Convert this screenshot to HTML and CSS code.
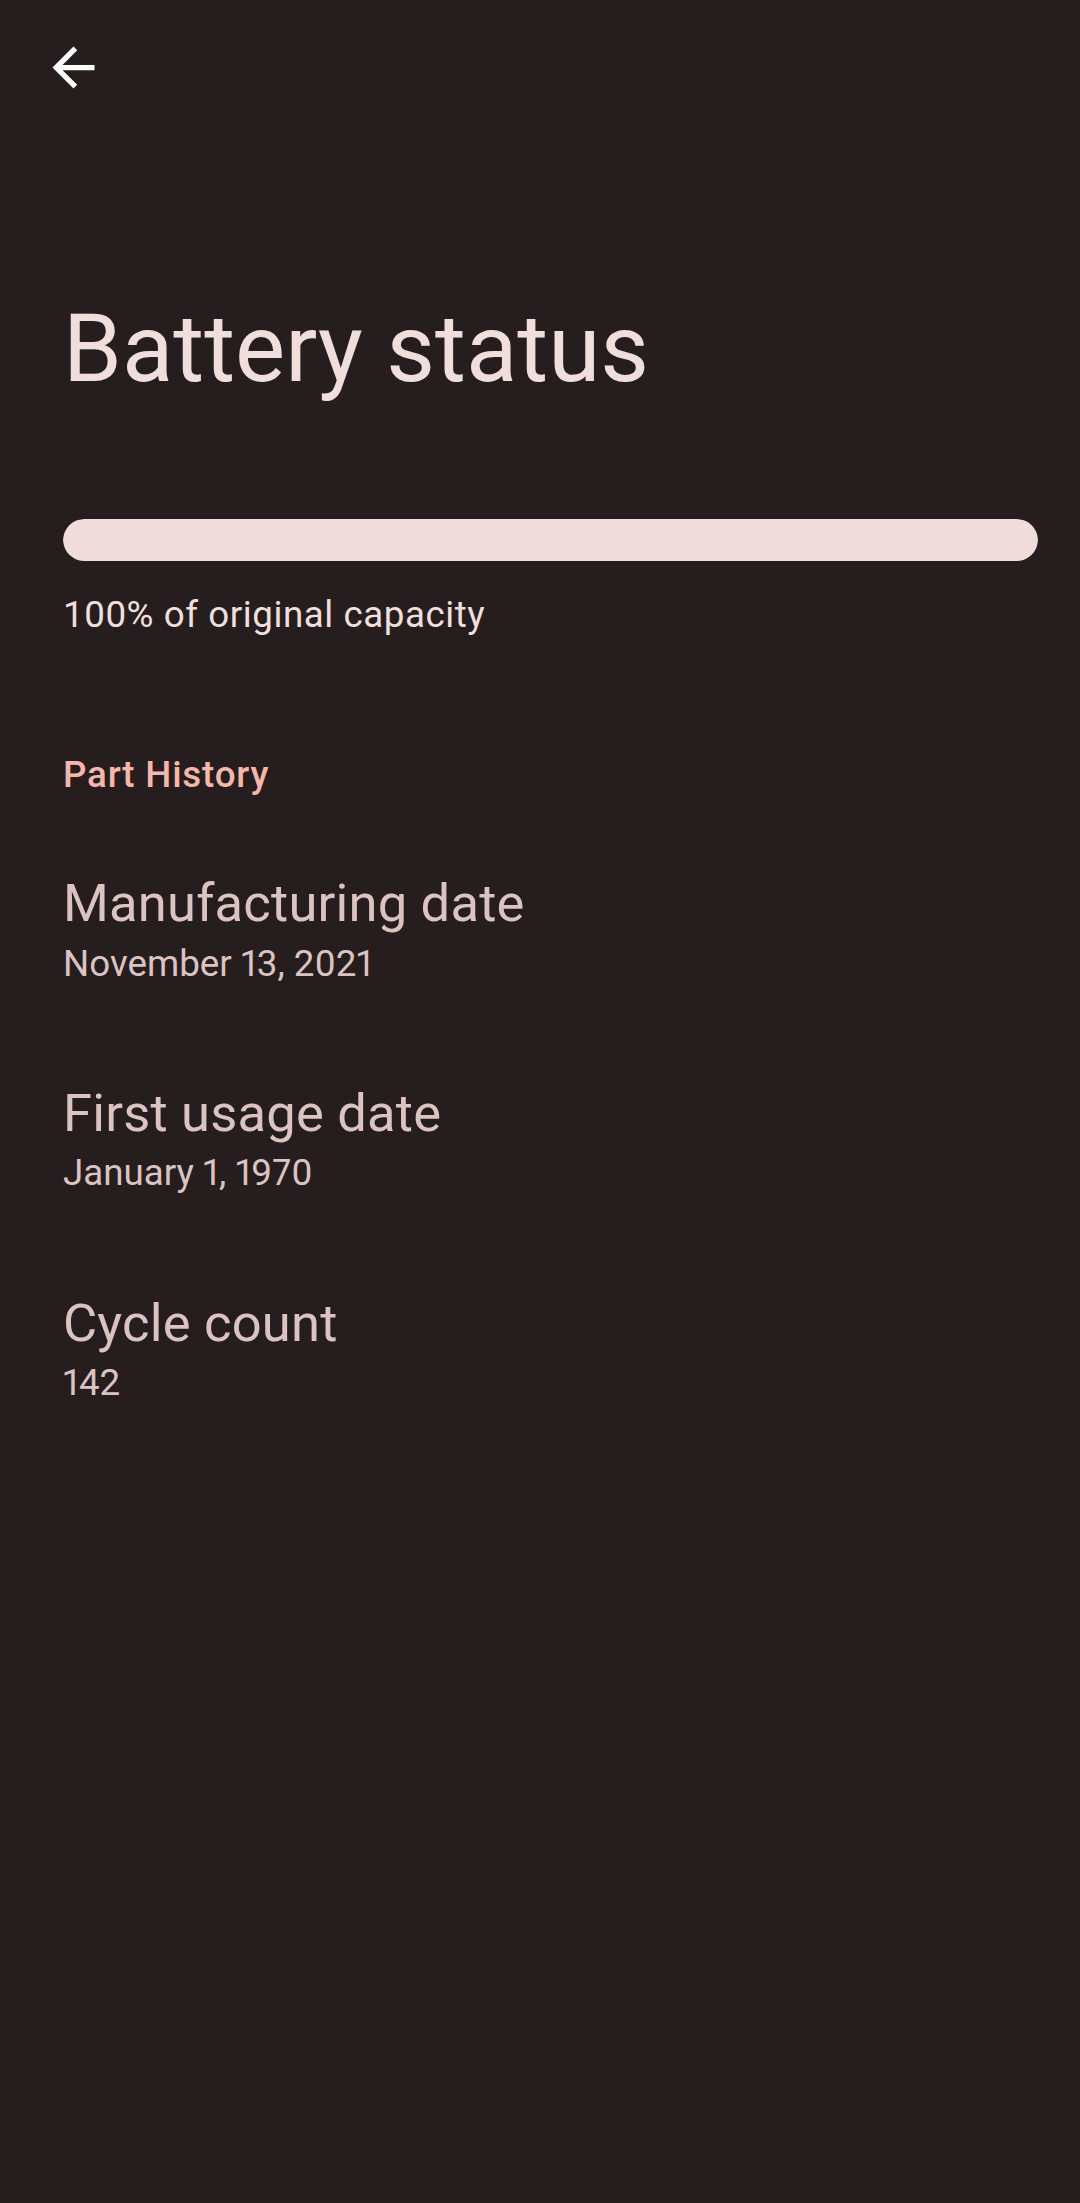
FILE: index.html
```html
<!DOCTYPE html>
<html lang="en">
<head>
    <meta charset="UTF-8">
    <meta name="viewport" content="width=device-width, initial-scale=1.0">
    <title>Battery status</title>
    <link rel="stylesheet" href="styles.css">
</head>
<body>
    <div class="toolbar">
        <button class="back-button" aria-label="Navigate up">
            <svg viewBox="0 0 24 24" width="63" height="63">
                <path d="M20 11H7.83l5.59-5.59L12 4l-8 8 8 8 1.41-1.41L7.83 13H20v-2z" fill="#ffffff"/>
            </svg>
        </button>
    </div>

    <h1 class="page-title">Battery status</h1>

    <div class="capacity">
        <div class="capacity-bar">
            <div class="capacity-fill" style="width: 100%"></div>
        </div>
        <p class="capacity-label">100% of original capacity</p>
    </div>

    <h2 class="category-title">Part History</h2>

    <div class="pref-list">
        <div class="pref-item">
            <div class="pref-title">Manufacturing date</div>
            <div class="pref-summary">November 13, 2021</div>
        </div>
        <div class="pref-item">
            <div class="pref-title">First usage date</div>
            <div class="pref-summary">January 1, 1970</div>
        </div>
        <div class="pref-item">
            <div class="pref-title">Cycle count</div>
            <div class="pref-summary">142</div>
        </div>
    </div>
</body>
</html>
```

FILE: styles.css
```css
* {
    box-sizing: border-box;
    margin: 0;
    padding: 0;
}

body {
    font-family: Roboto, "Noto Sans", Arial, sans-serif;
    background-color: #261e1e;
    min-height: 2203px;
}

.toolbar {
    padding: 36px 0 0 42px;
    height: 99px;
}

.back-button {
    display: block;
    width: 63px;
    height: 63px;
    background: none;
    border: none;
    cursor: pointer;
}

.back-button svg {
    display: block;
}

.page-title {
    margin: 193px 0 0 63px;
    font-size: 94.5px;
    font-weight: 400;
    line-height: 1.2;
    color: #f0dedd;
}

.capacity {
    margin: 114px 42px 0 63px;
}

.capacity-bar {
    height: 42px;
    border-radius: 21px;
    background-color: #4a3a3a;
    overflow: hidden;
}

.capacity-fill {
    height: 100%;
    border-radius: 21px;
    background-color: #f0dcdb;
}

.capacity-label {
    margin-top: 30px;
    font-size: 36.75px;
    line-height: 1.3;
    letter-spacing: 0.55px;
    color: #efdfdd;
}

.category-title {
    margin: 112px 0 0 63px;
    font-size: 36.75px;
    font-weight: 500;
    line-height: 1.3;
    letter-spacing: 0.8px;
    color: #f5b6ab;
}

.pref-list {
    display: flex;
    flex-direction: column;
    gap: 93.5px;
    margin: 72px 0 0 63px;
}

.pref-title {
    font-size: 52.5px;
    line-height: 1.25;
    letter-spacing: 0.2px;
    color: #dbc3c1;
}

.pref-summary {
    margin-top: 3px;
    font-size: 36.75px;
    line-height: 1.3;
    font-variant-numeric: proportional-nums;
    color: #dbc3c1;
}
```
